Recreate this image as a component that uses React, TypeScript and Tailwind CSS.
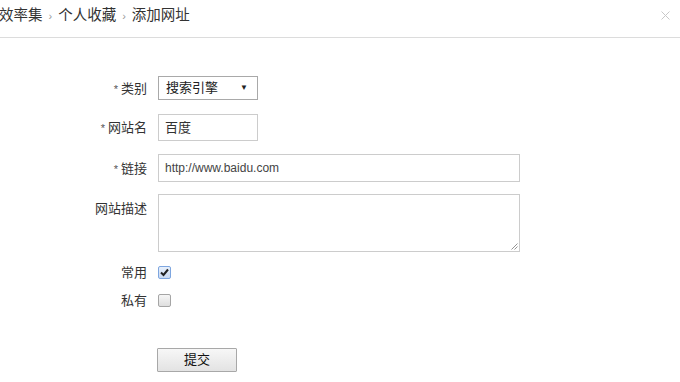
import { useState } from 'react'

const font = { fontFamily: '"Liberation Sans", "Noto Sans CJK SC", sans-serif' }

function Label({ text, required }: { text: string; required?: boolean }) {
  return (
    <div className="w-[147px] shrink-0 text-right text-[13px] text-[#333] leading-none">
      {required && <span className="text-[11px] mr-[3px] text-[#555]">*</span>}
      {text}
    </div>
  )
}

function Check({ checked }: { checked: boolean }) {
  return checked ? (
    <span className="w-[13px] h-[13px] rounded-[2px] border border-[#7ea6e0] bg-gradient-to-b from-[#e8f0fb] to-[#c9d9f1] flex items-center justify-center">
      <svg width="9" height="9" viewBox="0 0 9 9">
        <path d="M1 4.5 L3.5 7 L8 1.5" fill="none" stroke="#222" strokeWidth="2" />
      </svg>
    </span>
  ) : (
    <span className="w-[13px] h-[13px] rounded-[2px] border border-[#a5a5a5] bg-gradient-to-b from-[#f6f6f6] to-[#dedede]" />
  )
}

export default function App() {
  const [common] = useState(true)

  return (
    <div className="w-[680px] h-[382px] bg-white overflow-hidden" style={font}>
      {/* Header: breadcrumb + close */}
      <div className="h-[38px] border-b border-[#dcdcdc] flex items-center justify-between pl-0 pr-[10px]">
        <div className="flex items-center text-[14.5px] text-[#333] -ml-[1px] -mt-[5px]">
          <span>效率集</span>
          <span className="mx-[6px] text-[11px] text-[#999]">›</span>
          <span>个人收藏</span>
          <span className="mx-[6px] text-[11px] text-[#999]">›</span>
          <span>添加网址</span>
        </div>
        <svg width="9" height="9" viewBox="0 0 9 9" className="-mt-[7px]">
          <path d="M0.5 0.5 L8.5 8.5 M8.5 0.5 L0.5 8.5" stroke="#c8c8c8" strokeWidth="1" />
        </svg>
      </div>

      <div className="flex flex-col">
        {/* 类别 */}
        <div className="flex items-center gap-[11px] mt-[38px]">
          <Label text="类别" required />
          <div className="w-[100px] h-[24px] border border-[#a9a9a9] flex items-center justify-between pl-[7px] pr-[9px] text-[13px] text-[#222]">
            <span>搜索引擎</span>
            <span className="text-[8px] text-[#222]">▼</span>
          </div>
        </div>

        {/* 网站名 */}
        <div className="flex items-center gap-[11px] mt-[14px]">
          <Label text="网站名" required />
          <div className="w-[100px] h-[27px] border border-[#cccccc] flex items-center px-[6px] text-[13px] text-[#333]">
            百度
          </div>
        </div>

        {/* 链接 */}
        <div className="flex items-center gap-[11px] mt-[13px]">
          <Label text="链接" required />
          <div className="w-[362px] h-[28px] border border-[#cccccc] flex items-center px-[6px] text-[12px] text-[#444]">
            http://www.baidu.com
          </div>
        </div>

        {/* 网站描述 */}
        <div className="flex items-start gap-[11px] mt-[12px]">
          <div className="pt-[8px]">
            <Label text="网站描述" />
          </div>
          <div className="w-[362px] h-[58px] border border-[#cccccc] relative">
            <svg width="7" height="7" viewBox="0 0 7 7" className="absolute right-[1px] bottom-[1px]">
              <path d="M6.5 0.5 L0.5 6.5 M6.5 3.5 L3.5 6.5" stroke="#888" strokeWidth="0.9" />
            </svg>
          </div>
        </div>

        {/* 常用 */}
        <div className="flex items-center gap-[11px] mt-[14px]">
          <Label text="常用" />
          <Check checked={common} />
        </div>

        {/* 私有 */}
        <div className="flex items-center gap-[11px] mt-[15px]">
          <Label text="私有" />
          <Check checked={false} />
        </div>

        {/* 提交 */}
        <div className="pl-[157px] mt-[40px]">
          <button className="w-[80px] h-[24px] border border-[#a8a8a8] rounded-[1px] bg-gradient-to-b from-[#f7f7f7] to-[#e3e3e3] text-[13px] text-[#111]">
            提交
          </button>
        </div>
      </div>
    </div>
  )
}
